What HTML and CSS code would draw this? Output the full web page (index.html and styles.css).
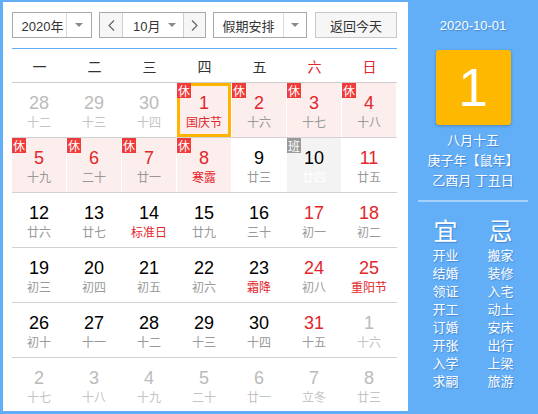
FILE: index.html
```html
<!DOCTYPE html>
<html lang="zh-CN">
<head>
<meta charset="utf-8">
<title>万年历</title>
<link rel="stylesheet" href="styles.css">
</head>
<body>
<div class="app">
  <div class="main">
    <div class="toolbar">
      <div class="sel year">
        <div class="val">2020年</div>
        <div class="arr"><span class="tri"></span></div>
      </div>
      <div class="sel month">
        <div class="btn prev"><svg width="7" height="11" viewBox="0 0 7 11"><polyline points="6,0.5 1,5.5 6,10.5" fill="none" stroke="#666" stroke-width="1.2"/></svg></div>
        <div class="mid"><span>10月</span><span class="tri"></span></div>
        <div class="btn next"><svg width="7" height="11" viewBox="0 0 7 11"><polyline points="1,0.5 6,5.5 1,10.5" fill="none" stroke="#666" stroke-width="1.2"/></svg></div>
      </div>
      <div class="sel holiday">
        <div class="val">假期安排</div>
        <div class="arr"><span class="tri"></span></div>
      </div>
      <div class="today-btn">返回今天</div>
    </div>
    <div class="line"></div>
    <div class="week">
      <div>一</div><div>二</div><div>三</div><div>四</div><div>五</div><div class="wkend">六</div><div class="wkend">日</div>
    </div>
    <div class="row">
      <div class="cell off"><div class="num">28</div><div class="lun">十二</div></div>
      <div class="cell off"><div class="num">29</div><div class="lun">十三</div></div>
      <div class="cell off"><div class="num">30</div><div class="lun">十四</div></div>
      <div class="cell rest red fest today"><span class="tag">休</span><div class="num">1</div><div class="lun">国庆节</div></div>
      <div class="cell rest red"><span class="tag">休</span><div class="num">2</div><div class="lun">十六</div></div>
      <div class="cell rest red"><span class="tag">休</span><div class="num">3</div><div class="lun">十七</div></div>
      <div class="cell rest red"><span class="tag">休</span><div class="num">4</div><div class="lun">十八</div></div>
    </div>
    <div class="row">
      <div class="cell rest red"><span class="tag">休</span><div class="num">5</div><div class="lun">十九</div></div>
      <div class="cell rest red"><span class="tag">休</span><div class="num">6</div><div class="lun">二十</div></div>
      <div class="cell rest red"><span class="tag">休</span><div class="num">7</div><div class="lun">廿一</div></div>
      <div class="cell rest red fest"><span class="tag">休</span><div class="num">8</div><div class="lun">寒露</div></div>
      <div class="cell"><div class="num">9</div><div class="lun">廿三</div></div>
      <div class="cell work"><span class="tag ban">班</span><div class="num">10</div><div class="lun">廿四</div></div>
      <div class="cell red"><div class="num">11</div><div class="lun">廿五</div></div>
    </div>
    <div class="row">
      <div class="cell"><div class="num">12</div><div class="lun">廿六</div></div>
      <div class="cell"><div class="num">13</div><div class="lun">廿七</div></div>
      <div class="cell fest"><div class="num">14</div><div class="lun">标准日</div></div>
      <div class="cell"><div class="num">15</div><div class="lun">廿九</div></div>
      <div class="cell"><div class="num">16</div><div class="lun">三十</div></div>
      <div class="cell red"><div class="num">17</div><div class="lun">初一</div></div>
      <div class="cell red"><div class="num">18</div><div class="lun">初二</div></div>
    </div>
    <div class="row">
      <div class="cell"><div class="num">19</div><div class="lun">初三</div></div>
      <div class="cell"><div class="num">20</div><div class="lun">初四</div></div>
      <div class="cell"><div class="num">21</div><div class="lun">初五</div></div>
      <div class="cell"><div class="num">22</div><div class="lun">初六</div></div>
      <div class="cell fest"><div class="num">23</div><div class="lun">霜降</div></div>
      <div class="cell red"><div class="num">24</div><div class="lun">初八</div></div>
      <div class="cell red fest"><div class="num">25</div><div class="lun">重阳节</div></div>
    </div>
    <div class="row">
      <div class="cell"><div class="num">26</div><div class="lun">初十</div></div>
      <div class="cell"><div class="num">27</div><div class="lun">十一</div></div>
      <div class="cell"><div class="num">28</div><div class="lun">十二</div></div>
      <div class="cell"><div class="num">29</div><div class="lun">十三</div></div>
      <div class="cell"><div class="num">30</div><div class="lun">十四</div></div>
      <div class="cell red"><div class="num">31</div><div class="lun">十五</div></div>
      <div class="cell off"><div class="num">1</div><div class="lun">十六</div></div>
    </div>
    <div class="row">
      <div class="cell off"><div class="num">2</div><div class="lun">十七</div></div>
      <div class="cell off"><div class="num">3</div><div class="lun">十八</div></div>
      <div class="cell off"><div class="num">4</div><div class="lun">十九</div></div>
      <div class="cell off"><div class="num">5</div><div class="lun">二十</div></div>
      <div class="cell off"><div class="num">6</div><div class="lun">廿一</div></div>
      <div class="cell off"><div class="num">7</div><div class="lun">立冬</div></div>
      <div class="cell off"><div class="num">8</div><div class="lun">廿三</div></div>
    </div>
  </div>
  <div class="side">
    <div class="date">2020-10-01</div>
    <div class="big">1</div>
    <div class="lunar">
      <div>八月十五</div>
      <div>庚子年【鼠年】</div>
      <div>乙酉月 丁丑日</div>
    </div>
    <div class="sep"></div>
    <div class="yiji">
      <div class="col">
        <div class="head">宜</div>
        <div>开业</div><div>结婚</div><div>领证</div><div>开工</div><div>订婚</div><div>开张</div><div>入学</div><div>求嗣</div>
      </div>
      <div class="col">
        <div class="head">忌</div>
        <div>搬家</div><div>装修</div><div>入宅</div><div>动土</div><div>安床</div><div>出行</div><div>上梁</div><div>旅游</div>
      </div>
    </div>
  </div>
</div>
</body>
</html>
```

FILE: styles.css
```css
body {
  margin: 0;
}

.app {
  width: 538px;
  height: 414px;
  display: flex;
  background: #62aef7;
  font-family: "Liberation Sans", "Noto Sans CJK SC", sans-serif;
  overflow: hidden;
}

.main {
  width: 405px;
  height: 409px;
  margin: 2px 0 0 3px;
  padding: 10px 11px 0 9px;
  box-sizing: border-box;
  background: #fff;
  overflow: hidden;
}

/* toolbar */
.toolbar {
  display: flex;
  height: 26px;
  font-size: 13px;
  color: #333;
}

.sel {
  display: flex;
  height: 26px;
  box-sizing: border-box;
  border: 1px solid #a9a9a9;
  background: #fff;
}

.sel .val {
  flex: 1;
  display: flex;
  align-items: center;
  justify-content: center;
}

.sel .arr {
  border-left: 1px solid #dcdcdc;
  display: flex;
  align-items: center;
  justify-content: center;
}

.tri {
  width: 0;
  height: 0;
  border-left: 4px solid transparent;
  border-right: 4px solid transparent;
  border-top: 4px solid #8a8a8a;
}

.year {
  width: 80px;
}

.year .val {
  padding-left: 6px;
}

.year .arr {
  width: 24px;
}

.month {
  width: 107px;
  margin-left: 7px;
}

.month .btn {
  display: flex;
  align-items: center;
  justify-content: center;
  background: #f6f6f6;
}

.month .prev {
  width: 22px;
  border-right: 1px solid #cfcfcf;
}

.month .next {
  width: 21px;
  border-left: 1px solid #cfcfcf;
}

.month .mid {
  flex: 1;
  display: flex;
  align-items: center;
  gap: 8px;
  padding-left: 10px;
}

.holiday {
  width: 94px;
  margin-left: 7px;
}

.holiday .arr {
  width: 22px;
}

.today-btn {
  width: 82px;
  height: 26px;
  margin-left: 8px;
  box-sizing: border-box;
  border: 1px solid #c8c8c8;
  background: #f6f6f6;
  display: flex;
  align-items: center;
  justify-content: center;
}

.line {
  height: 1px;
  margin-top: 10px;
  background: #62aef7;
}

/* calendar grid */
.week {
  display: grid;
  grid-template-columns: repeat(7, 55px);
  height: 33px;
  align-items: center;
  justify-items: center;
  border-bottom: 1px solid #cdcdcd;
  font-size: 14px;
  color: #333;
  font-family: "Noto Sans CJK SC", sans-serif;
}

.week .wkend {
  color: #e3262b;
}

.row {
  display: grid;
  grid-template-columns: repeat(7, 55px);
  border-bottom: 1px solid #d2d2d2;
}

.cell {
  position: relative;
  height: 54px;
  box-sizing: border-box;
  border-right: 1px solid #fff;
  padding-top: 9px;
  text-align: center;
}

.num {
  font-size: 18px;
  line-height: 22px;
  color: #000;
}

.lun {
  margin-top: 1px;
  font-size: 12px;
  line-height: 16px;
  color: #999;
}

.red .num {
  color: #e3262b;
}

.fest .lun {
  color: #e3262b;
}

.off .num {
  color: #bbb;
}

.off .lun {
  color: #c4c4c4;
}

.rest {
  background: #fdeeee;
}

.work {
  background: #f3f3f3;
}

.work .lun {
  color: #fff;
}

.today {
  box-shadow: inset 0 0 0 3px #ffb500;
}

.tag {
  position: absolute;
  left: 0;
  top: 0;
  width: 14px;
  height: 15px;
  line-height: 15px;
  font-size: 12px;
  color: #fff;
  background: #f03b3b;
  text-align: center;
  font-family: "Noto Sans CJK SC", sans-serif;
}

.tag.ban {
  background: #9a9a9a;
}

/* side panel */
.side {
  flex: 1;
  display: flex;
  flex-direction: column;
  align-items: center;
  padding-top: 16px;
  color: #fff;
  font-size: 13px;
  text-align: center;
  text-shadow: 1px 1px 1px rgba(20, 70, 140, 0.35);
}

.date {
  line-height: 20px;
}

.big {
  width: 75px;
  height: 75px;
  margin-top: 14px;
  border-radius: 3px;
  background: #ffb800;
  box-shadow: 0 1px 3px rgba(0, 0, 0, 0.25);
  font-size: 53px;
  line-height: 75px;
  text-shadow: none;
}

.lunar {
  margin-top: 6px;
  line-height: 20px;
}

.sep {
  width: 110px;
  height: 2px;
  margin-top: 9px;
  background: #a6d1fa;
}

.yiji {
  display: flex;
  gap: 15px;
  margin-top: 15px;
}

.col {
  width: 40px;
  line-height: 18px;
}

.col .head {
  font-size: 24px;
  line-height: 30px;
}
```
